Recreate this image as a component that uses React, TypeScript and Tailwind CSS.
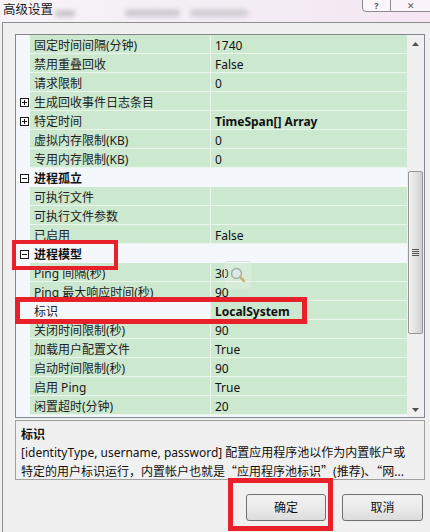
import React from "react";

type Row =
  | { kind: "prop"; name: string; value?: string; bold?: boolean; expand?: boolean; selected?: boolean }
  | { kind: "cat"; name: string };

const rows: Row[] = [
  { kind: "prop", name: "固定时间间隔(分钟)", value: "1740" },
  { kind: "prop", name: "禁用重叠回收", value: "False" },
  { kind: "prop", name: "请求限制", value: "0" },
  { kind: "prop", name: "生成回收事件日志条目", expand: true },
  { kind: "prop", name: "特定时间", value: "TimeSpan[] Array", bold: true, expand: true },
  { kind: "prop", name: "虚拟内存限制(KB)", value: "0" },
  { kind: "prop", name: "专用内存限制(KB)", value: "0" },
  { kind: "cat", name: "进程孤立" },
  { kind: "prop", name: "可执行文件" },
  { kind: "prop", name: "可执行文件参数" },
  { kind: "prop", name: "已启用", value: "False" },
  { kind: "cat", name: "进程模型" },
  { kind: "prop", name: "Ping 间隔(秒)", value: "30" },
  { kind: "prop", name: "Ping 最大响应时间(秒)", value: "90" },
  { kind: "prop", name: "标识", value: "LocalSystem", bold: true, selected: true },
  { kind: "prop", name: "关闭时间限制(秒)", value: "90" },
  { kind: "prop", name: "加载用户配置文件", value: "True" },
  { kind: "prop", name: "启动时间限制(秒)", value: "90" },
  { kind: "prop", name: "启用 Ping", value: "True" },
  { kind: "prop", name: "闲置超时(分钟)", value: "20" },
];

const cjk = { fontFamily: '"Noto Sans CJK SC", sans-serif' };

function Expander({ open }: { open: boolean }) {
  return (
    <svg width="9" height="9" viewBox="0 0 9 9" className="shrink-0">
      <rect x="0.5" y="0.5" width="8" height="8" fill="#fff" stroke="#1a1a1a" />
      <line x1="2" y1="4.5" x2="7" y2="4.5" stroke="#1a1a1a" />
      {!open && <line x1="4.5" y1="2" x2="4.5" y2="7" stroke="#1a1a1a" />}
    </svg>
  );
}

function GridRow({ row }: { row: Row }) {
  if (row.kind === "cat") {
    return (
      <div className="flex h-[19px] items-center border-b border-[#f4f7fc] bg-[#f4f7fc]">
        <div className="flex w-[14px] justify-center pl-[2px] pt-[2px]">
          <Expander open />
        </div>
        <span className="pl-[4px] pt-[3px] font-bold text-[#111]">{row.name}</span>
      </div>
    );
  }
  return (
    <div className="flex h-[19px]">
      <div className="flex w-[14px] items-center justify-center bg-[#f4f7fc] pl-[2px] pt-[2px]">
        {row.expand && <Expander open={false} />}
      </div>
      <div
        className={`flex w-[181px] items-center border-b border-r border-[#eaf5ec] pl-[4px] pt-[3px] text-[#222] ${
          row.selected ? "bg-[#f4f7fc]" : "bg-[#cce8cf]"
        }`}
      >
        {row.name}
      </div>
      <div
        className={`flex flex-1 items-center border-b border-[#eaf5ec] bg-[#cce8cf] pl-[4px] pt-[3px] text-[#111] ${
          row.bold ? "font-bold" : ""
        }`}
      >
        {row.value}
      </div>
    </div>
  );
}

function Scrollbar() {
  return (
    <div className="relative flex w-[17px] flex-col items-center bg-[#f0f0f0]">
      <div className="flex h-[17px] w-full items-center justify-center">
        <svg width="7" height="4" viewBox="0 0 7 4">
          <path d="M0 4 L3.5 0 L7 4 Z" fill="#505050" />
        </svg>
      </div>
      <div className="mt-[119px] flex h-[163px] w-[15px] items-center justify-center rounded-[2px] border border-[#979797] bg-gradient-to-r from-[#f2f2f2] via-[#e2e2e2] to-[#cfcfcf]">
        <div className="flex flex-col gap-[1px]">
          <div className="h-[1px] w-[7px] bg-[#555]" />
          <div className="h-[1px] w-[7px] bg-[#555]" />
          <div className="h-[1px] w-[7px] bg-[#555]" />
          <div className="h-[1px] w-[7px] bg-[#555]" />
        </div>
      </div>
      <div className="absolute bottom-[2px] flex h-[10px] w-full items-center justify-center">
        <svg width="7" height="4" viewBox="0 0 7 4">
          <path d="M0 0 L3.5 4 L7 0 Z" fill="#505050" />
        </svg>
      </div>
    </div>
  );
}

export default function App() {
  return (
    <div
      className="relative flex h-[532px] w-[430px] flex-col overflow-hidden bg-[#f0f0f0] text-[12px] leading-none"
      style={{ fontFamily: '"Noto Sans", "Noto Sans CJK SC", sans-serif' }}
    >
      {/* Title bar */}
      <div className="relative h-[22px] shrink-0 overflow-hidden bg-gradient-to-r from-[#f7f3f7] via-[#f3eef5] to-[#f5e6f2]">
        <div className="absolute left-[55px] top-[10px] h-[7px] w-[20px] rounded bg-[#c9c6ce] blur-[2px]" />
        <div className="absolute left-[125px] top-[9px] h-[8px] w-[55px] rounded bg-[#cfccd4] blur-[2px]" />
        <div className="absolute left-[190px] top-[9px] h-[8px] w-[58px] rounded bg-[#d2cfd6] blur-[2px]" />
        <span className="absolute left-[3px] top-[2px] text-[12.5px] leading-[16px] text-[#1a1a1a]">高级设置</span>
        <div className="absolute right-0 top-[-1px] flex h-[13px]">
          <div className="flex w-[29px] items-start justify-center rounded-bl-[4px] border border-[#8c8c8c] bg-white/60">
            <span className="mt-[1px] text-[9px] leading-[9px] font-bold text-[#5a5a5a]">?</span>
          </div>
          <div className="flex w-[39px] items-start justify-center border-y border-[#8c8c8c] bg-white/60">
            <span className="mt-[1px] text-[9px] leading-[9px] text-[#5a5a5a]">✕</span>
          </div>
        </div>
      </div>

      {/* Window frame */}
      <div className="ml-[2px] flex flex-1 flex-col border-l border-t border-[#8e8e8e] pl-[12px] pt-[11px]">
        {/* Property grid */}
        <div className="flex h-[384px] w-[410px] border border-[#828790] bg-[#f4f7fc]">
          <div className="flex w-[391px] flex-col">
            {rows.map((r, i) => (
              <GridRow key={i} row={r} />
            ))}
          </div>
          <Scrollbar />
        </div>

        {/* Description */}
        <div className="mt-[2px] h-[60px] w-[410px] border border-[#a0a0a0] px-[5px] pt-[5px] leading-[18px] text-[#111]">
          <div className="font-bold">标识</div>
          <div className="whitespace-nowrap">[identityType, username, password] 配置应用程序池以作为内置帐户或</div>
          <div className="whitespace-nowrap">
            特定的用户标识运行<span style={cjk}>，</span>内置帐户也就是<span style={cjk}>“</span>应用程序池标识
            <span style={cjk}>”</span>(推荐)<span style={cjk}>、“</span>网...
          </div>
        </div>

        {/* Buttons */}
        <div className="mt-[14px] flex w-[410px] justify-end gap-[16px] pr-[2px]">
          <button className="h-[27px] w-[80px] rounded-[3px] border border-[#707070] bg-gradient-to-b from-[#f2f2f2] via-[#ebebeb] to-[#dcdcdc] text-[12px] text-[#111]">
            确定
          </button>
          <button className="h-[27px] w-[81px] rounded-[3px] border border-[#707070] bg-gradient-to-b from-[#f2f2f2] via-[#ebebeb] to-[#dcdcdc] text-[12px] text-[#111]">
            取消
          </button>
        </div>
      </div>

      {/* Magnifier cursor artifact */}
      <div className="absolute left-[224px] top-[261px] flex h-[28px] w-[28px] items-center justify-center rounded-[4px] border border-[#d8e6da] bg-white/20">
        <svg width="18" height="18" viewBox="0 0 18 18">
          <circle cx="7.5" cy="7.5" r="5" fill="#dde9f0" fillOpacity="0.6" stroke="#9fb3a8" strokeWidth="1.5" />
          <line x1="11" y1="11" x2="15" y2="15" stroke="#c8b27a" strokeWidth="2.5" strokeLinecap="round" />
        </svg>
      </div>

      {/* Red annotation boxes */}
      <div className="absolute left-[12px] top-[240px] h-[30px] w-[106px] border-[4px] border-[#e8202a]" />
      <div className="absolute left-[15px] top-[297px] h-[27px] w-[292px] border-[5px] border-[#e8202a]" />
      <div className="absolute left-[228px] top-[478px] h-[53px] w-[105px] border-[5px] border-[#e8202a]" />
    </div>
  );
}
